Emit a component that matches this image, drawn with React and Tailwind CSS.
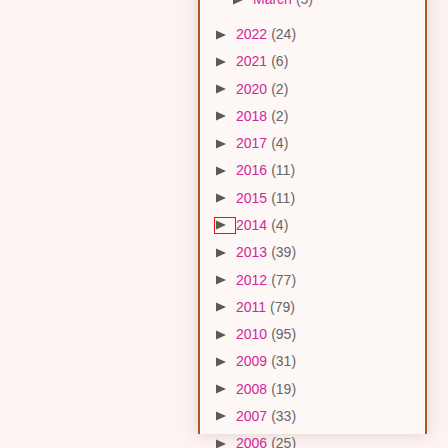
import React from "react";

const years = [
  ["2022", 24],
  ["2021", 6],
  ["2020", 2],
  ["2018", 2],
  ["2017", 4],
  ["2016", 11],
  ["2015", 11],
  ["2014", 4],
  ["2013", 39],
  ["2012", 77],
  ["2011", 79],
  ["2010", 95],
  ["2009", 31],
  ["2008", 19],
  ["2007", 33],
  ["2006", 25],
];

const Arrow = () => (
  <svg width="10" height="10" viewBox="0 0 10 10" className="shrink-0">
    <polygon points="0,0.5 10,5 0,9.5" fill="#5a5a5a" />
  </svg>
);

const App = () => {
  return (
    <div
      className="w-[448px] h-[448px] overflow-hidden bg-[#fcf3f2] text-[14px]"
      style={{ fontFamily: '"Liberation Sans", Arial, sans-serif' }}
    >
      <div className="ml-[198px] w-[229px] h-full bg-[#fdf7f6] border-x-2 border-[#b0561e] shadow-[0_0_14px_rgba(120,90,80,0.22)]">
        <ul className="-mt-[14px]">
          {/* tail of the expanded month list */}
          <li className="h-[27px] flex items-center pl-[33px]">
            <Arrow />
            <span className="ml-[10px] text-[#d1289a]">March</span>
            <span className="ml-1 text-[#666]">(5)</span>
          </li>
          <li className="h-[8px]" />
          {years.map(([year, count]) => (
            <li key={year} className="h-[27.27px] flex items-center pl-[16px]">
              {year === "2014" ? (
                <span className="-ml-[2px] w-[22px] h-[17px] border border-[#ee1111] flex items-center pl-[1px]">
                  <Arrow />
                </span>
              ) : (
                <span className="w-[20px] flex items-center">
                  <Arrow />
                </span>
              )}
              <span className="text-[#d1289a]">{year}</span>
              <span className="ml-1 text-[#666]">({count})</span>
            </li>
          ))}
        </ul>
      </div>
    </div>
  );
};

export default App;
